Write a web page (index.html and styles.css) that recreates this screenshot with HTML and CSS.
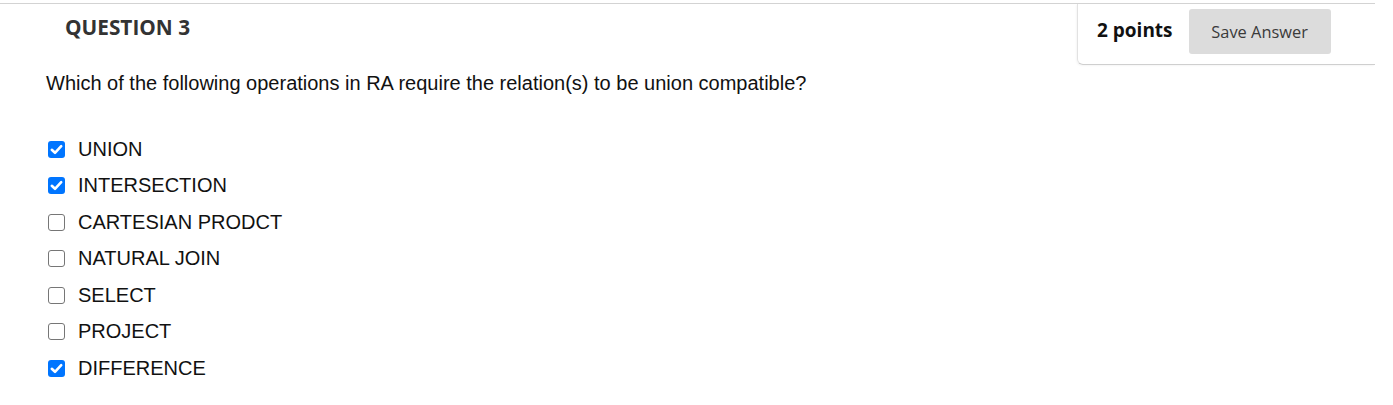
FILE: index.html
```html
<!DOCTYPE html>
<html>
<head>
<meta charset="utf-8">
<link rel="stylesheet" href="styles.css">
</head>
<body>
<div class="page">
  <div class="header">
    <h2 class="title">QUESTION 3</h2>
    <div class="panel">
      <span class="points">2 points</span>
      <button class="save">Save Answer</button>
    </div>
  </div>
  <p class="question">Which of the following operations in RA require the relation(s) to be union compatible?</p>
  <ul class="options">
    <li class="option"><span class="box checked"><svg viewBox="0 0 17 17" width="17" height="17"><path d="M3.8 8.8 L7 11.8 L13.2 5.2" fill="none" stroke="#fff" stroke-width="2.6" stroke-linecap="round" stroke-linejoin="round"/></svg></span><span class="label">UNION</span></li>
    <li class="option"><span class="box checked"><svg viewBox="0 0 17 17" width="17" height="17"><path d="M3.8 8.8 L7 11.8 L13.2 5.2" fill="none" stroke="#fff" stroke-width="2.6" stroke-linecap="round" stroke-linejoin="round"/></svg></span><span class="label">INTERSECTION</span></li>
    <li class="option"><span class="box"></span><span class="label">CARTESIAN PRODCT</span></li>
    <li class="option"><span class="box"></span><span class="label">NATURAL JOIN</span></li>
    <li class="option"><span class="box"></span><span class="label">SELECT</span></li>
    <li class="option"><span class="box"></span><span class="label">PROJECT</span></li>
    <li class="option"><span class="box checked"><svg viewBox="0 0 17 17" width="17" height="17"><path d="M3.8 8.8 L7 11.8 L13.2 5.2" fill="none" stroke="#fff" stroke-width="2.6" stroke-linecap="round" stroke-linejoin="round"/></svg></span><span class="label">DIFFERENCE</span></li>
  </ul>
</div>
</body>
</html>
```
FILE: styles.css
```css
html, body {
  margin: 0;
  padding: 0;
  background: #fff;
}
.page {
  margin-top: 3px;
  width: 1375px;
  border-top: 1px solid #d3d3d3;
  font-family: "Liberation Sans", Arial, sans-serif;
}
.header {
  display: flex;
  justify-content: space-between;
  align-items: flex-start;
  height: 61px;
}
.title {
  margin: 0;
  padding: 9px 0 0 65px;
  font-family: "Open Sans", sans-serif;
  font-weight: 700;
  font-size: 20.8px;
  line-height: 28px;
  color: #333;
}
.panel {
  box-sizing: border-box;
  width: 298px;
  height: 61px;
  border-left: 1px solid #e2e2e2;
  border-bottom: 1px solid #cfcfcf;
  border-bottom-left-radius: 6px;
  box-shadow: -1px 1px 2px rgba(0,0,0,0.04);
  display: flex;
  align-items: flex-start;
  padding: 5px 0 0 19px;
}
.points {
  font-family: "Open Sans", sans-serif;
  font-weight: 700;
  font-size: 19px;
  line-height: 42px;
  color: #111;
}
.save {
  margin-left: 16px;
  width: 142px;
  height: 45px;
  border: none;
  border-radius: 3px;
  background: #dcdcdc;
  font-family: "Open Sans", sans-serif;
  font-size: 16.4px;
  color: #3a3a3a;
  padding: 0;
}
.question {
  margin: 6px 0 0 0;
  padding-left: 46px;
  font-size: 20px;
  line-height: 24px;
  color: #111;
}
.options {
  list-style: none;
  margin: 36px 0 0 0;
  padding: 0 0 0 48px;
}
.option {
  display: flex;
  align-items: center;
  height: 36.5px;
}
.box {
  box-sizing: border-box;
  width: 17px;
  height: 17px;
  border: 1.5px solid #767676;
  border-radius: 3px;
  background: #fff;
  display: flex;
  align-items: center;
  justify-content: center;
  flex: none;
}
.box.checked {
  border: none;
  background: #0075ff;
}
.label {
  margin-left: 13px;
  font-size: 20px;
  color: #111;
}
```
